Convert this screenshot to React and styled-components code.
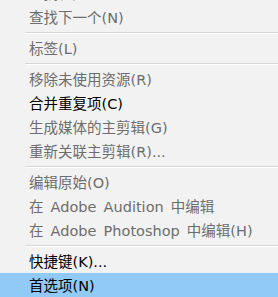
import React from "react";
import styled, { createGlobalStyle } from "styled-components";

const Global = createGlobalStyle`
  html, body { margin: 0; padding: 0; background: #f2f2f2; overflow: hidden; }
  body { font-family: "DejaVu Sans", "Noto Sans CJK SC", sans-serif; }
`;

const Menu = styled.ul`
  list-style: none;
  margin: -19px 0 0 0;
  padding: 0;
  width: 278px;
  background: #f2f2f2;
`;

const Item = styled.li`
  box-sizing: border-box;
  height: 24px;
  line-height: 24px;
  padding: 1px 0 0 29px;
  font-size: 14.5px;
  word-spacing: 2.5px;
  white-space: pre;
  color: ${(p) => (p.$disabled ? "#6d6d6d" : "#000000")};
  background: ${(p) => (p.$active ? "#91c9f7" : "transparent")};
`;

const Separator = styled.li`
  height: 7px;
  display: flex;
  flex-direction: column;
  justify-content: center;
  padding-left: 25px;
  &::before {
    content: "";
    display: block;
    height: 1px;
    background: #d7d7d7;
  }
  &::after {
    content: "";
    display: block;
    height: 1px;
    background: #ffffff;
  }
`;

const items = [
  { t: "查找(F)...", d: true },
  { t: "查找下一个(N)", d: true },
  "sep",
  { t: "标签(L)", d: true },
  "sep",
  { t: "移除未使用资源(R)", d: true },
  { t: "合并重复项(C)" },
  { t: "生成媒体的主剪辑(G)", d: true },
  { t: "重新关联主剪辑(R)...", d: true },
  "sep",
  { t: "编辑原始(O)", d: true },
  { t: "在 Adobe Audition 中编辑", d: true },
  { t: "在 Adobe Photoshop 中编辑(H)", d: true },
  "sep",
  { t: "快捷键(K)..." },
  { t: "首选项(N)", a: true },
];

export default function App() {
  return (
    <>
      <Global />
      <Menu>
        {items.map((it, i) =>
          it === "sep" ? (
            <Separator key={i} />
          ) : (
            <Item key={i} $disabled={it.d} $active={it.a}>
              {it.t}
            </Item>
          )
        )}
      </Menu>
    </>
  );
}
